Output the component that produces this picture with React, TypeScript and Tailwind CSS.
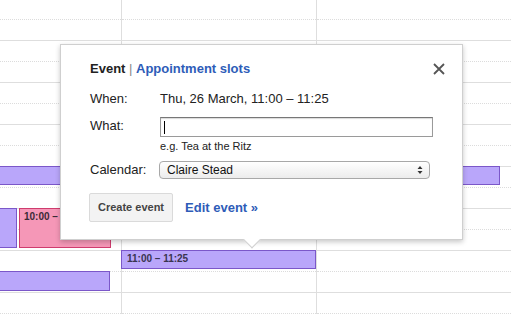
import React from "react"

const ROWS = 14

function Column({ className }: { className: string }) {
  return (
    <div className={`flex flex-col ${className}`}>
      <div className="h-[20px] shrink-0 border-b border-dotted border-[#dcdcdc]"></div>
      {Array.from({ length: ROWS }).map((_, i) => (
        <div
          key={i}
          className={`h-[21px] shrink-0 border-b ${i % 2 === 0 ? "border-solid border-[#dedede]" : "border-dotted border-[#dcdcdc]"}`}
        ></div>
      ))}
    </div>
  )
}

export default function App() {
  return (
    <div className="relative w-[511px] h-[314px] overflow-hidden bg-white font-['Liberation_Sans',Arial,sans-serif] text-[#222]">
      {/* Calendar grid */}
      <div className="flex">
        <Column className="w-[122px] border-r border-[#dedede]" />
        <Column className="w-[195px] border-r border-[#dedede]" />
        <Column className="flex-1" />
      </div>

      {/* Events */}
      <div className="absolute left-[-2px] top-[166px] w-[502px] h-[19px] bg-[#b9a6fa] border border-[#7b57c9]"></div>
      <div className="absolute left-[-2px] top-[208px] w-[19px] h-[40px] bg-[#b9a6fa] border border-[#7b57c9]"></div>
      <div className="absolute left-[19px] top-[208px] w-[92px] h-[40px] bg-[#f597b7] border border-[#cf3c6e] px-[4px] pt-[2px] text-[10px] font-bold text-[#3b2a36] leading-[12px]">
        10:00 – 10:30
      </div>
      <div className="absolute left-[121px] top-[250px] w-[195px] h-[19px] bg-[#b9a6fa] border border-[#7b57c9] px-[5px] pt-[2px] text-[10px] font-bold text-[#3a3450] leading-[12px]">
        11:00 – 11:25
      </div>
      <div className="absolute left-[-2px] top-[271px] w-[112px] h-[20px] bg-[#b9a6fa] border border-[#7b57c9]"></div>

      {/* Quick add bubble */}
      <div className="absolute left-[60px] top-[44px] w-[403px] h-[196px] bg-white border border-[#cfcfcf] shadow-[0_2px_5px_rgba(0,0,0,0.22)] pl-[29px] pr-[17px] pt-[16px]">
        <div className="flex items-center justify-between h-[16px]">
          <div className="text-[13px] font-bold leading-[16px]">
            <span className="text-[#222]">Event</span>
            <span className="text-[#888] font-normal"> | </span>
            <span className="text-[#2e5cb8]">Appointment slots</span>
          </div>
          <svg width="12" height="12" viewBox="0 0 12 12" className="mr-[0px]">
            <path d="M1 1 L11 11 M11 1 L1 11" stroke="#555" strokeWidth="1.8" />
          </svg>
        </div>

        <div className="flex items-center mt-[14px] h-[16px] text-[13px] leading-[16px]">
          <div className="w-[70px]">When:</div>
          <div>Thu, 26 March, 11:00 – 11:25</div>
        </div>

        <div className="flex mt-[10px]">
          <div className="w-[70px] text-[13px] leading-[16px] pt-[1px]">What:</div>
          <div className="flex flex-col">
            <div className="w-[273px] h-[20px] border border-[#9a9a9a] border-t-[#777] shadow-[inset_0_1px_1px_rgba(0,0,0,0.15)] bg-white flex items-center pl-[3px]">
              <div className="w-[1px] h-[13px] bg-black"></div>
            </div>
            <div className="text-[11px] leading-[13px] mt-[3px] text-[#222]">e.g. Tea at the Ritz</div>
          </div>
        </div>

        <div className="flex items-center mt-[8px]">
          <div className="w-[70px] text-[13px] leading-[16px]">Calendar:</div>
          <div className="w-[271px] h-[18px] -ml-[1px] rounded-[4px] border border-[#a8a8a8] bg-gradient-to-b from-white to-[#ececec] flex items-center justify-between pl-[7px] pr-[6px] text-[12px] leading-[14px] text-[#111]">
            <span>Claire Stead</span>
            <svg width="6" height="10" viewBox="0 0 6 10">
              <path d="M3 1 L5.5 4 L0.5 4 Z M3 9 L5.5 6 L0.5 6 Z" fill="#333" />
            </svg>
          </div>
        </div>

        <div className="flex items-center mt-[14px] -ml-[1px]">
          <button className="h-[29px] px-[8px] rounded-[2px] border border-[#dadada] bg-[#f3f3f3] text-[11px] font-bold text-[#444] leading-[13px]">
            Create event
          </button>
          <span className="ml-[12px] text-[13px] font-bold text-[#2e5cb8]">Edit event »</span>
        </div>

        {/* Arrow */}
        <div className="absolute left-[185px] bottom-[-7px] w-[12px] h-[12px] rotate-45 bg-white border-r border-b border-[#cfcfcf]"></div>
      </div>
    </div>
  )
}
